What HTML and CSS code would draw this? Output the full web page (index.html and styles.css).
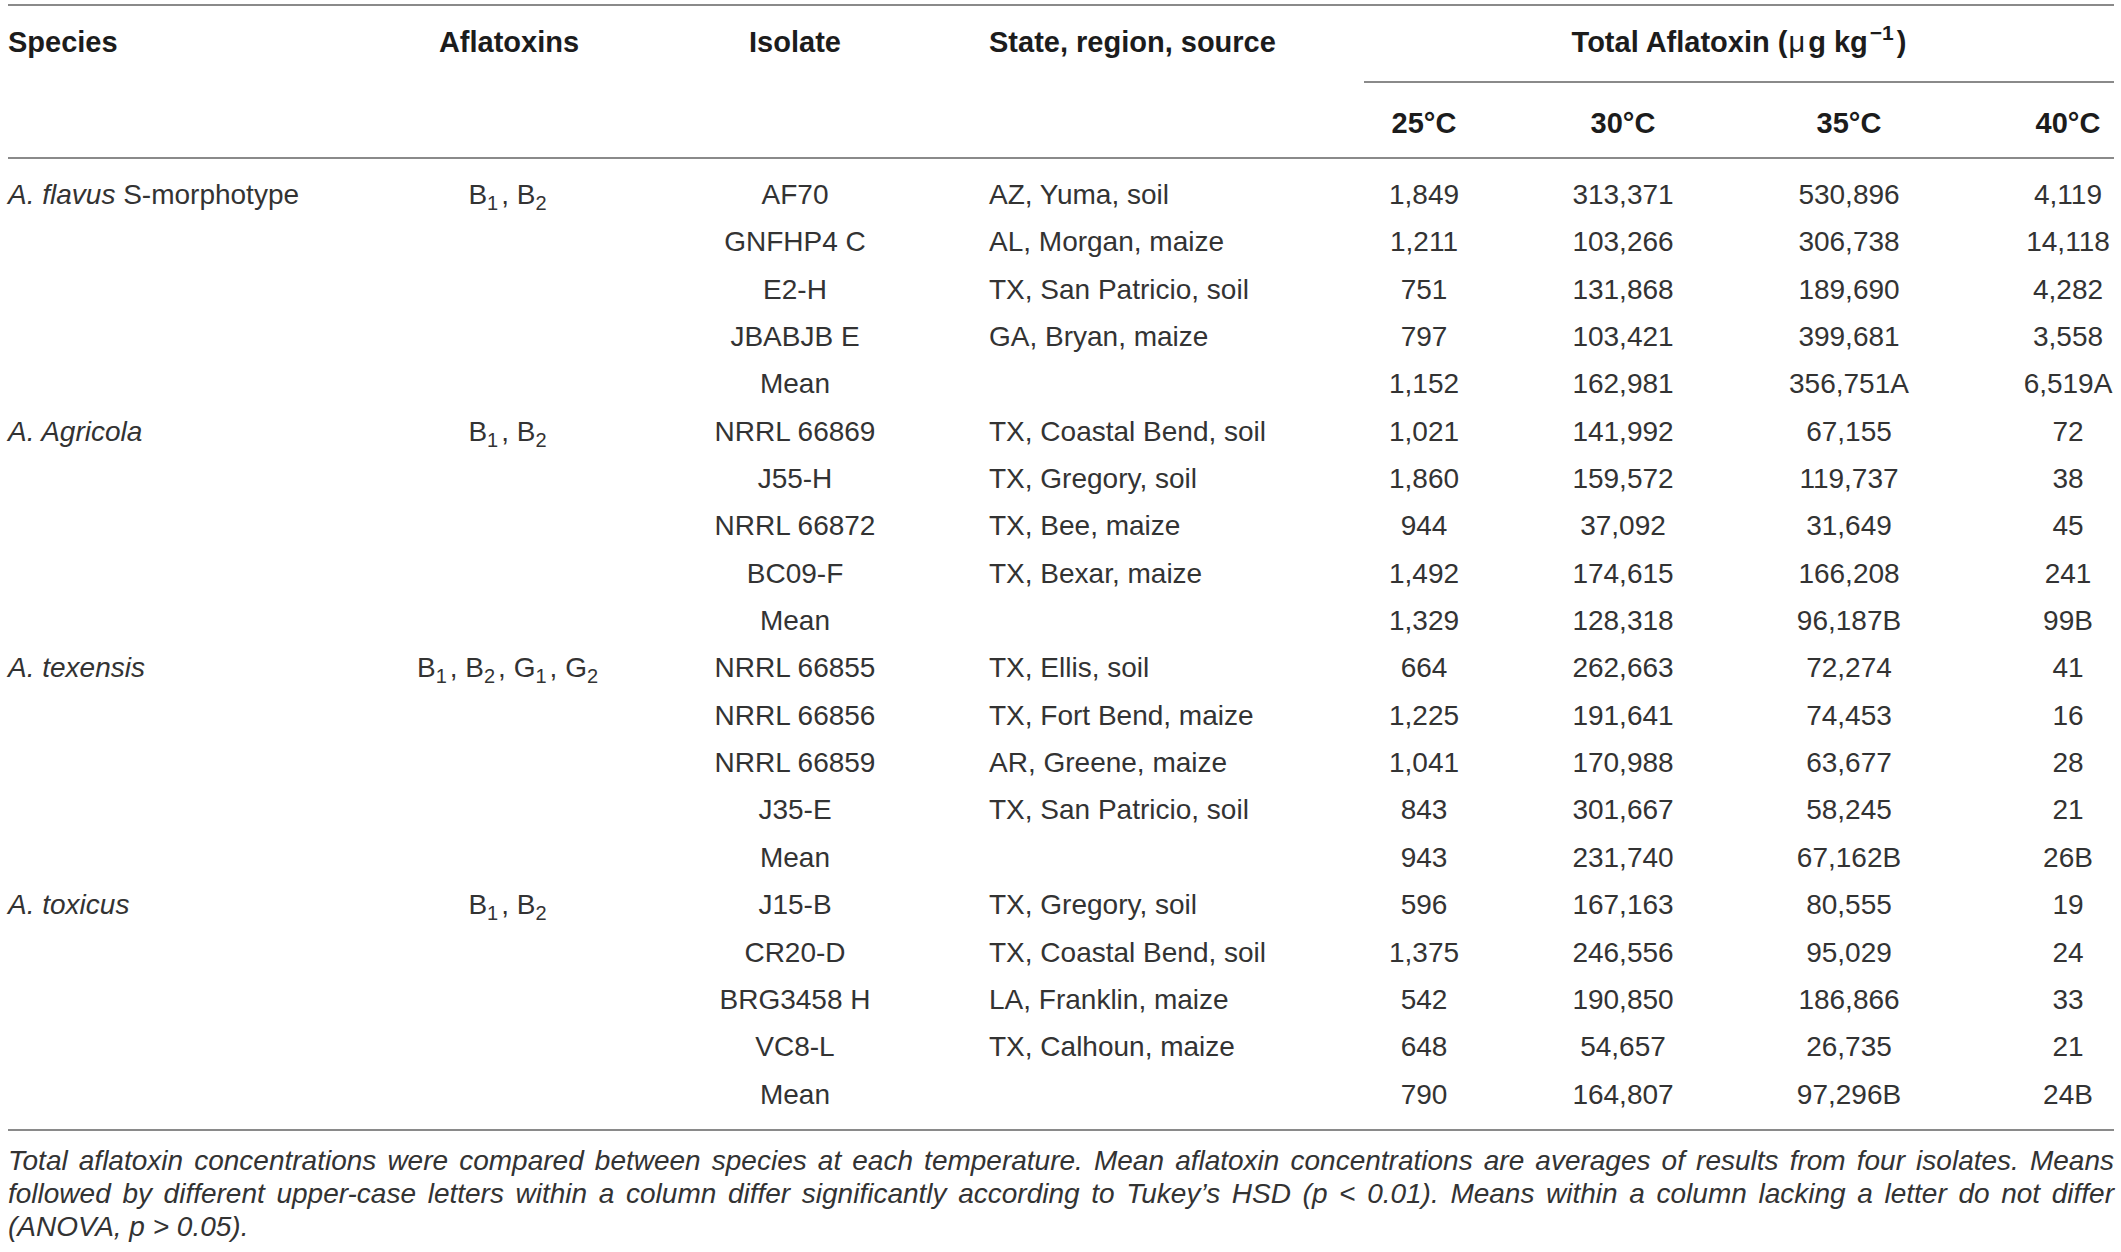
FILE: index.html
```html
<!DOCTYPE html>
<html lang="en">
<head>
<meta charset="utf-8">
<title>Total aflatoxin by species and temperature</title>
<link rel="stylesheet" href="styles.css">
</head>
<body>
<div class="wrap">
  <div class="thead">
    <div class="th c1 span2">Species</div>
    <div class="th c2 span2">Aflatoxins</div>
    <div class="th c3 span2">Isolate</div>
    <div class="th c4 span2">State, region, source</div>
    <div class="th group">Total Aflatoxin (<span class="mu">μ</span>g kg<sup class="sup">−1</sup>)</div>
    <div class="th sub-h c5">25°C</div>
    <div class="th sub-h c6">30°C</div>
    <div class="th sub-h c7">35°C</div>
    <div class="th sub-h c8">40°C</div>
  </div>

  <div class="tbody">
    <div class="row"><div class="c1"><i>A. flavus</i> S-morphotype</div><div class="c2">B<sub class="s">1</sub>, B<sub class="s">2</sub></div><div class="c3">AF70</div><div class="c4">AZ, Yuma, soil</div><div class="c5">1,849</div><div class="c6">313,371</div><div class="c7">530,896</div><div class="c8">4,119</div></div>
    <div class="row"><div class="c1"></div><div class="c2"></div><div class="c3">GNFHP4 C</div><div class="c4">AL, Morgan, maize</div><div class="c5">1,211</div><div class="c6">103,266</div><div class="c7">306,738</div><div class="c8">14,118</div></div>
    <div class="row"><div class="c1"></div><div class="c2"></div><div class="c3">E2-H</div><div class="c4">TX, San Patricio, soil</div><div class="c5">751</div><div class="c6">131,868</div><div class="c7">189,690</div><div class="c8">4,282</div></div>
    <div class="row"><div class="c1"></div><div class="c2"></div><div class="c3">JBABJB E</div><div class="c4">GA, Bryan, maize</div><div class="c5">797</div><div class="c6">103,421</div><div class="c7">399,681</div><div class="c8">3,558</div></div>
    <div class="row"><div class="c1"></div><div class="c2"></div><div class="c3">Mean</div><div class="c4"></div><div class="c5">1,152</div><div class="c6">162,981</div><div class="c7">356,751A</div><div class="c8">6,519A</div></div>

    <div class="row"><div class="c1"><i>A. Agricola</i></div><div class="c2">B<sub class="s">1</sub>, B<sub class="s">2</sub></div><div class="c3">NRRL 66869</div><div class="c4">TX, Coastal Bend, soil</div><div class="c5">1,021</div><div class="c6">141,992</div><div class="c7">67,155</div><div class="c8">72</div></div>
    <div class="row"><div class="c1"></div><div class="c2"></div><div class="c3">J55-H</div><div class="c4">TX, Gregory, soil</div><div class="c5">1,860</div><div class="c6">159,572</div><div class="c7">119,737</div><div class="c8">38</div></div>
    <div class="row"><div class="c1"></div><div class="c2"></div><div class="c3">NRRL 66872</div><div class="c4">TX, Bee, maize</div><div class="c5">944</div><div class="c6">37,092</div><div class="c7">31,649</div><div class="c8">45</div></div>
    <div class="row"><div class="c1"></div><div class="c2"></div><div class="c3">BC09-F</div><div class="c4">TX, Bexar, maize</div><div class="c5">1,492</div><div class="c6">174,615</div><div class="c7">166,208</div><div class="c8">241</div></div>
    <div class="row"><div class="c1"></div><div class="c2"></div><div class="c3">Mean</div><div class="c4"></div><div class="c5">1,329</div><div class="c6">128,318</div><div class="c7">96,187B</div><div class="c8">99B</div></div>

    <div class="row"><div class="c1"><i>A. texensis</i></div><div class="c2">B<sub class="s">1</sub>, B<sub class="s">2</sub>, G<sub class="s">1</sub>, G<sub class="s">2</sub></div><div class="c3">NRRL 66855</div><div class="c4">TX, Ellis, soil</div><div class="c5">664</div><div class="c6">262,663</div><div class="c7">72,274</div><div class="c8">41</div></div>
    <div class="row"><div class="c1"></div><div class="c2"></div><div class="c3">NRRL 66856</div><div class="c4">TX, Fort Bend, maize</div><div class="c5">1,225</div><div class="c6">191,641</div><div class="c7">74,453</div><div class="c8">16</div></div>
    <div class="row"><div class="c1"></div><div class="c2"></div><div class="c3">NRRL 66859</div><div class="c4">AR, Greene, maize</div><div class="c5">1,041</div><div class="c6">170,988</div><div class="c7">63,677</div><div class="c8">28</div></div>
    <div class="row"><div class="c1"></div><div class="c2"></div><div class="c3">J35-E</div><div class="c4">TX, San Patricio, soil</div><div class="c5">843</div><div class="c6">301,667</div><div class="c7">58,245</div><div class="c8">21</div></div>
    <div class="row"><div class="c1"></div><div class="c2"></div><div class="c3">Mean</div><div class="c4"></div><div class="c5">943</div><div class="c6">231,740</div><div class="c7">67,162B</div><div class="c8">26B</div></div>

    <div class="row"><div class="c1"><i>A. toxicus</i></div><div class="c2">B<sub class="s">1</sub>, B<sub class="s">2</sub></div><div class="c3">J15-B</div><div class="c4">TX, Gregory, soil</div><div class="c5">596</div><div class="c6">167,163</div><div class="c7">80,555</div><div class="c8">19</div></div>
    <div class="row"><div class="c1"></div><div class="c2"></div><div class="c3">CR20-D</div><div class="c4">TX, Coastal Bend, soil</div><div class="c5">1,375</div><div class="c6">246,556</div><div class="c7">95,029</div><div class="c8">24</div></div>
    <div class="row"><div class="c1"></div><div class="c2"></div><div class="c3">BRG3458 H</div><div class="c4">LA, Franklin, maize</div><div class="c5">542</div><div class="c6">190,850</div><div class="c7">186,866</div><div class="c8">33</div></div>
    <div class="row"><div class="c1"></div><div class="c2"></div><div class="c3">VC8-L</div><div class="c4">TX, Calhoun, maize</div><div class="c5">648</div><div class="c6">54,657</div><div class="c7">26,735</div><div class="c8">21</div></div>
    <div class="row"><div class="c1"></div><div class="c2"></div><div class="c3">Mean</div><div class="c4"></div><div class="c5">790</div><div class="c6">164,807</div><div class="c7">97,296B</div><div class="c8">24B</div></div>
  </div>

  <p class="caption">
    <span class="cap-line">Total aflatoxin concentrations were compared between species at each temperature. Mean aflatoxin concentrations are averages of results from four isolates. Means</span>
    <span class="cap-line">followed by different upper-case letters within a column differ significantly according to Tukey’s HSD (p &lt; 0.01). Means within a column lacking a letter do not differ</span>
    <span class="cap-line last">(ANOVA, p &gt; 0.05).</span>
  </p>
</div>
</body>
</html>
```

FILE: styles.css
```css
html, body {
  margin: 0;
  padding: 0;
  background: #ffffff;
}

body {
  font-family: "Liberation Sans", Arial, Helvetica, sans-serif;
  font-size: 28px;
  color: #333333;
}

.wrap {
  width: 2106px;
  padding: 4px 0 0 8px;
}

/* shared column template */
.thead,
.row {
  display: grid;
  grid-template-columns: 381px 240px 332px 403px 120px 278px 174px 178px;
}

.c1 { grid-column: 1; text-align: left; }
.c2 { grid-column: 2; text-align: center; }
.c3 { grid-column: 3; text-align: center; }
.c4 { grid-column: 4; text-align: left; padding-left: 28px; }
.c5 { grid-column: 5; text-align: center; }
.c6 { grid-column: 6; text-align: center; }
.c7 { grid-column: 7; text-align: center; }
.c8 { grid-column: 8; text-align: center; padding-left: 86px; }

/* header */
.thead {
  border-top: 2px solid #8a8a8a;
  border-bottom: 2px solid #8a8a8a;
  font-weight: bold;
  font-size: 29px;
  color: #1c1c1c;
}

.th {
  line-height: 32px;
  white-space: nowrap;
}

.span2 {
  grid-row: 1 / span 2;
  padding-top: 20px;
}

.group {
  grid-column: 5 / span 4;
  grid-row: 1;
  text-align: center;
  padding-top: 20px;
  padding-bottom: 23px;
  border-bottom: 2px solid #8a8a8a;
}

.sub-h {
  grid-row: 2;
  padding-top: 24px;
  padding-bottom: 18px;
}

.mu {
  font-weight: normal;
  margin: 0 3px 0 1px;
}

.sup {
  font-size: 21px;
  line-height: 0;
  vertical-align: 12px;
  margin-left: 2px;
  margin-right: 3px;
}

/* body */
.tbody {
  padding-top: 12px;
  padding-bottom: 11.5px;
  border-bottom: 2px solid #8a8a8a;
}

.row > div {
  line-height: 47.35px;
  height: 47.35px;
  white-space: nowrap;
}

.s {
  font-size: 20px;
  line-height: 0;
  vertical-align: -6px;
  margin-right: 3px;
}

/* caption */
.caption {
  margin: 13px 0 0 0;
  font-style: italic;
  line-height: 33px;
  color: #333333;
}

.cap-line {
  display: block;
  text-align: justify;
  text-align-last: justify;
}

.cap-line.last {
  text-align: left;
  text-align-last: left;
}
```
